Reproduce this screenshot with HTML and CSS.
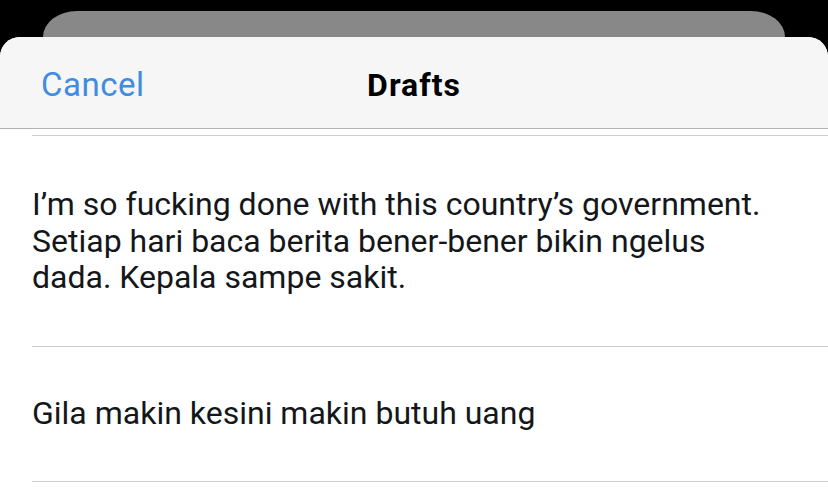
FILE: index.html
```html
<!DOCTYPE html>
<html>
<head>
<meta charset="utf-8">
<link rel="stylesheet" href="styles.css">
</head>
<body>
<div class="screen">
  <div class="back-card"></div>
  <div class="sheet">
    <div class="header">
      <span class="cancel">Cancel</span>
      <span class="title">Drafts</span>
      <span class="spacer"></span>
    </div>
    <div class="list">
      <div class="item first">I’m so fucking done with this country’s government. Setiap hari baca berita bener-bener bikin ngelus dada. Kepala sampe sakit.</div>
      <div class="item second">Gila makin kesini makin butuh uang</div>
    </div>
  </div>
</div>
</body>
</html>
```
FILE: styles.css
```css
html, body {
  margin: 0;
  padding: 0;
  background: #000;
}
.screen {
  width: 828px;
  height: 491px;
  overflow: hidden;
  background: #000;
  padding-top: 11px;
  box-sizing: border-box;
  font-family: Roboto, "Liberation Sans", sans-serif;
}
.back-card {
  margin: 0 43px;
  height: 26px;
  background: #888888;
  border-radius: 34px 34px 0 0 / 26px 26px 0 0;
}
.sheet {
  background: #fff;
  border-radius: 20px 20px 0 0;
  overflow: hidden;
  height: 460px;
}
.header {
  height: 92px;
  background: #f6f6f6;
  border-bottom: 1px solid #b3b3b3;
  box-sizing: border-box;
  display: flex;
  align-items: center;
  justify-content: space-between;
  padding: 4px 41px 0;
}
.cancel {
  color: #3f8ce0;
  font-size: 33px;
  letter-spacing: 0.5px;
  width: 140px;
}
.title {
  color: #000;
  font-weight: 700;
  font-size: 32px;
  letter-spacing: 1px;
}
.spacer {
  width: 140px;
}
.list {
  padding-top: 6px;
  padding-left: 32px;
}
.item {
  border-top: 1px solid #cdcdcd;
  color: #14171a;
  font-size: 32px;
  line-height: 36.7px;
  padding-right: 40px;
}
.item.first {
  padding-top: 50px;
  padding-bottom: 50px;
  height: 110px;
}
.item.second {
  padding-top: 48px;
  padding-bottom: 49px;
  height: 37px;
  border-bottom: 1px solid #cdcdcd;
}
```
